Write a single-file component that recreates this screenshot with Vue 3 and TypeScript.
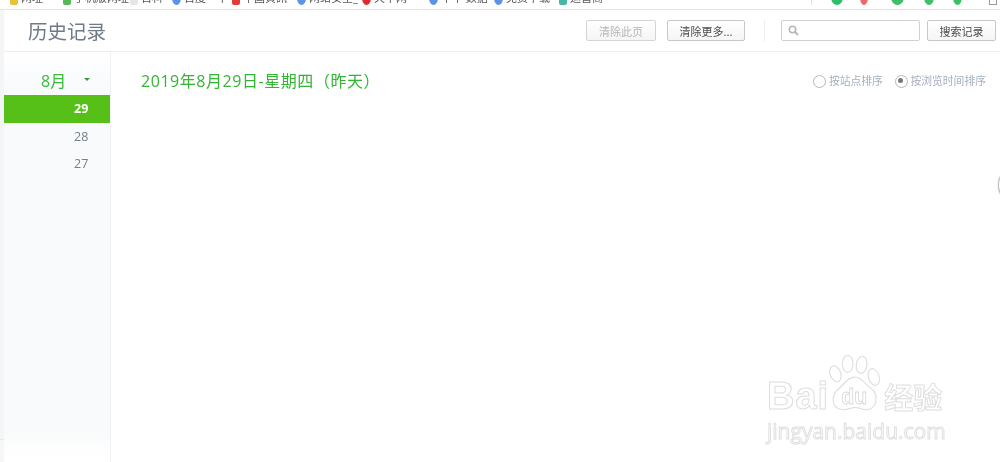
<script setup lang="ts">
interface Mark { color: string; label: string; width: number; round: boolean }
interface Tool { color: string; width: number; gap: number }
const marks: Mark[] = [
  { color: '#e8c23a', label: '网址', width: 53, round: false },
  { color: '#57b85a', label: '手机版网址', width: 67, round: false },
  { color: '#e6e6e6', label: '百科', width: 42, round: false },
  { color: '#5b93e8', label: '百度一下', width: 60, round: true },
  { color: '#e33b3b', label: '中国資訊', width: 65, round: false },
  { color: '#5b93e8', label: '网络安全_', width: 65, round: true },
  { color: '#e32b2b', label: '天下网', width: 67, round: true },
  { color: '#5b93e8', label: '中华 数据', width: 65, round: true },
  { color: '#5b93e8', label: '免费下载', width: 65, round: true },
  { color: '#49b6a5', label: '运营商', width: 60, round: false },
]
const tools: Tool[] = [
  { color: '#2fbf6a', width: 12, gap: 17 },
  { color: '#e86a6a', width: 8, gap: 23 },
  { color: '#3fbf6a', width: 13, gap: 20 },
  { color: '#3fbf6a', width: 10, gap: 19 },
  { color: '#3fbf6a', width: 9, gap: 27 },
]
const days = [29, 28, 27]
</script>

<template>
  <div class="page">
    <div class="bookmarks">
      <div class="marks">
        <span v-for="m in marks" :key="m.label" class="mark" :style="{ width: m.width + 'px' }">
          <i class="mark-icon" :class="{ round: m.round }" :style="{ background: m.color }"></i>{{ m.label }}
        </span>
      </div>
      <div class="tools">
        <i class="tool-sep"></i>
        <i
          v-for="(t, i) in tools"
          :key="i"
          class="tool"
          :style="{ background: t.color, width: t.width + 'px', marginRight: t.gap + 'px' }"
        ></i>
        <i class="tool-gray"></i>
      </div>
    </div>
    <div class="frame">
      <div class="strip"></div>
      <div class="main">
        <header class="header">
          <h1 class="title">历史记录</h1>
          <div class="actions">
            <button class="btn disabled">清除此页</button>
            <button class="btn more">清除更多...</button>
            <i class="divider"></i>
            <div class="search">
              <svg width="11" height="11" viewBox="0 0 11 11"><circle cx="4.5" cy="4.5" r="3.2" fill="none" stroke="#b5b8bc" stroke-width="1.6"/><path d="M7 7l3 3" stroke="#b5b8bc" stroke-width="1.8"/></svg>
            </div>
            <button class="btn find">搜索记录</button>
          </div>
        </header>
        <div class="body">
          <aside class="side">
            <div class="month"><span>8月</span><i class="caret"></i></div>
            <div v-for="d in days" :key="d" class="day" :class="{ active: d === 29 }">{{ d }}</div>
          </aside>
          <section class="content">
            <h2 class="date">2019年8月29日-星期四（昨天）</h2>
            <div class="sort">
              <label class="radio"><i class="dot"></i>按站点排序</label>
              <label class="radio"><i class="dot on"></i>按浏览时间排序</label>
            </div>
          </section>
        </div>
      </div>
    </div>
    <i class="edge"></i>
    <div class="wm">
      <div class="wm-row">
        <span class="wm-bai">Bai</span>
        <span class="wm-paw">
          <svg width="54" height="58" viewBox="0 0 66 71">
            <g fill="#fff" stroke="#e0e0e0" stroke-width="1.5">
              <ellipse cx="9" cy="23" rx="6.5" ry="10" transform="rotate(-22 9 23)"/>
              <ellipse cx="24" cy="11" rx="6.5" ry="10.5"/>
              <ellipse cx="41" cy="12" rx="6.5" ry="10.5" transform="rotate(8 41 12)"/>
              <ellipse cx="56" cy="27" rx="6.5" ry="10.5" transform="rotate(-18 56 27)"/>
              <path d="M33 27c9 0 12 9 20 14 9 7 8 26-7 26-5 0-9-3-13-3s-8 3-14 3C5 67 3 52 11 43c8-5 12-16 22-16z"/>
            </g>
            <text x="32" y="60" text-anchor="middle" class="wm-du">du</text>
          </svg>
        </span>
        <span class="wm-cn">经验</span>
      </div>
      <div class="wm-url">jingyan.baidu.com</div>
    </div>
  </div>
</template>

<style>
html, body { margin: 0; background: #fff; overflow: hidden; }
</style>

<style scoped>
.page {
  position: relative;
  width: 1000px;
  height: 462px;
  overflow: hidden;
  display: flex;
  flex-direction: column;
  background: #fff;
  font-family: "Open Sans", "Noto Sans CJK SC", sans-serif;
  filter: blur(0.35px);
}
.bookmarks {
  height: 9px;
  flex: none;
  display: flex;
  justify-content: space-between;
  align-items: flex-start;
  overflow: hidden;
  border-bottom: 1px solid #e3e4e5;
  background: #fff;
}
.marks { display: flex; padding-left: 10px; height: 5px; align-items: flex-end; }
.mark {
  display: flex;
  align-items: flex-end;
  gap: 3px;
  height: 16px;
  line-height: 14px;
  font-size: 11px;
  color: #555;
  white-space: nowrap;
  overflow: hidden;
  flex: none;
}
.mark-icon { width: 8px; height: 14px; flex: none; border-radius: 2px; }
.mark-icon.round { border-radius: 50%; width: 9px; height: 14px; }
.tools { display: flex; align-items: flex-end; height: 5px; padding-right: 3px; }
.tool-sep { width: 1px; height: 5px; background: #e0e0e0; margin-right: 19px; }
.tool { height: 16px; border-radius: 50%; flex: none; }
.tool-gray { width: 8px; height: 12px; border: 1px solid #999; box-sizing: border-box; }
.frame { flex: 1; display: flex; min-height: 0; }
.strip { width: 4px; flex: none; background: linear-gradient(#f4f5f6 429px, #e6e7e8 429px, #e6e7e8 430px, #f6f7f7 430px); }
.main { flex: 1; display: flex; flex-direction: column; min-width: 0; }
.header {
  height: 41px;
  flex: none;
  display: flex;
  align-items: center;
  justify-content: space-between;
  border-bottom: 1px solid #ebedee;
  box-sizing: content-box;
  padding: 0 4px 0 24px;
}
.title { margin: 0; font-size: 19.5px; font-weight: 400; color: #6f7a88; }
.actions { display: flex; align-items: center; }
.btn {
  height: 21px;
  box-sizing: border-box;
  padding: 0;
  border: 1px solid #c6c8ca;
  border-radius: 2px;
  background: linear-gradient(#fff, #f5f5f5);
  font: 11px "Noto Sans CJK SC", sans-serif;
  color: #4d4d4d;
}
.btn.disabled { width: 70px; color: #b3b6ba; border-color: #d2d4d6; }
.btn.more { width: 78px; margin-left: 11px; }
.btn.find { width: 69px; margin-left: 7px; }
.divider { width: 1px; height: 21px; background: #eeeeee; margin: 0 16px 0 19px; }
.search {
  width: 139px;
  height: 21px;
  box-sizing: border-box;
  border: 1px solid #cfd0d2;
  border-radius: 2px;
  display: flex;
  align-items: center;
  padding-left: 6px;
  background: #fff;
}
.body { flex: 1; display: flex; min-height: 0; }
.side {
  width: 106px;
  flex: none;
  border-right: 1px solid #eef0f2;
  box-sizing: content-box;
  background: linear-gradient(#ffffff 0, #f8fafc 36px, #f8fafc 380px, #fcfdfc 392px, #ffffff 410px);
  padding-top: 14px;
}
.month {
  height: 27px;
  padding-bottom: 2px;
  display: flex;
  align-items: center;
  font-size: 16px;
  color: #3db83a;
  padding-left: 37px;
}
.caret {
  margin-left: 18px;
  width: 0;
  height: 0;
  border: 3px solid transparent;
  border-top: 3px solid #3a9a36;
  border-bottom: 0;
}
.day {
  height: 27.5px;
  line-height: 27px;
  padding-left: 70px;
  font-size: 12.5px;
  color: #75808e;
}
.day.active { background: #56c018; color: #fff; font-weight: 700; }
.content {
  flex: 1;
  display: flex;
  justify-content: space-between;
  align-items: flex-start;
  padding: 17px 14px 0 30px;
}
.date { margin: 0; font-size: 16px; line-height: 24px; font-weight: 400; letter-spacing: 0.55px; color: #33b533; }
.sort { display: flex; gap: 12px; padding-top: 4px; }
.radio { display: flex; align-items: center; font-size: 10.8px; line-height: 16px; color: #a4afc0; }
.dot {
  width: 13px;
  height: 13px;
  box-sizing: border-box;
  border: 1.5px solid #b8b8b8;
  border-radius: 50%;
  margin-right: 2.5px;
  background: #fff;
  position: relative;
}
.dot.on::after {
  content: "";
  position: absolute;
  left: 2.5px;
  top: 2.5px;
  width: 5px;
  height: 5px;
  border-radius: 50%;
  background: #777;
}
.edge {
  position: absolute;
  left: 998px;
  top: 170px;
  width: 20px;
  height: 28px;
  border-radius: 50%;
  border: 1px solid #b8b8b8;
  box-shadow: 0 0 2px #ccc;
  background: #fff;
}
.wm { position: absolute; left: 767px; top: 353px; width: 190px; pointer-events: none; }
.wm-row { display: flex; align-items: flex-end; height: 60px; }
.wm-bai {
  font: 700 38px/40px "Liberation Sans", sans-serif;
  color: #fff;
  -webkit-text-stroke: 1px #dedede;
  margin-bottom: -3px;
  letter-spacing: 1px;
}
.wm-paw { width: 54px; margin-left: -1px; flex: none; height: 58px; }
.wm-paw svg { display: block; }
.wm-du { font: 700 26px "Liberation Sans", sans-serif; fill: #fff; stroke: #d8d8d8; stroke-width: 1px; }
.wm-cn {
  font: 700 29px/34px "Noto Sans CJK SC", sans-serif;
  color: #fff;
  -webkit-text-stroke: 1px #dedede;
  margin-left: 2px;
  white-space: nowrap;
}
.wm-url {
  font: 400 21px/24px "Open Sans", sans-serif;
  color: #fff;
  -webkit-text-stroke: 1px #e0e0e0;
  white-space: nowrap;
  margin-top: 6px;
}
</style>
